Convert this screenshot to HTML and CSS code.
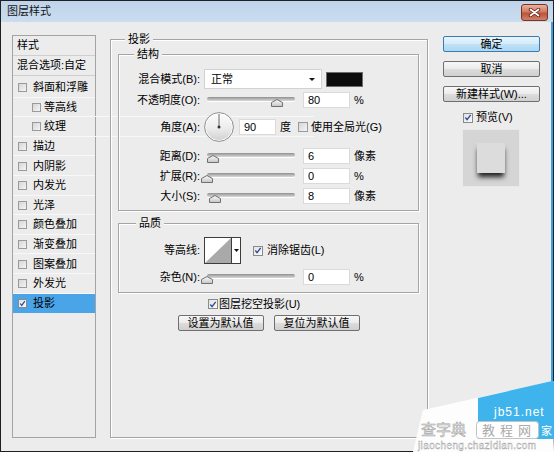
FILE: index.html
```html
<!DOCTYPE html>
<html lang="zh-CN">
<head>
<meta charset="utf-8">
<title>图层样式</title>
<link rel="stylesheet" href="styles.css">
</head>
<body>
<div class="window">
  <header class="titlebar">
    <span class="title">图层样式</span>
    <span class="close" aria-label="关闭">
      <svg width="13" height="9" viewBox="0 0 13 9"><path d="M2.5 1.5 L10.5 7.5 M10.5 1.5 L2.5 7.5" stroke="#5a1e12" stroke-width="3.4" stroke-linecap="round"/><path d="M2.5 1.5 L10.5 7.5 M10.5 1.5 L2.5 7.5" stroke="#fff" stroke-width="1.7" stroke-linecap="round"/></svg>
    </span>
  </header>
  <div class="content">
    <ul class="style-list">
      <li class="hdr">样式</li>
      <li class="hdr">混合选项:自定</li>
      <li class="item first"><span class="cb"></span>斜面和浮雕</li>
      <li class="item sub"><span class="cb"></span>等高线</li>
      <li class="item sub"><span class="cb"></span>纹理</li>
      <li class="item"><span class="cb"></span>描边</li>
      <li class="item"><span class="cb"></span>内阴影</li>
      <li class="item"><span class="cb"></span>内发光</li>
      <li class="item"><span class="cb"></span>光泽</li>
      <li class="item"><span class="cb"></span>颜色叠加</li>
      <li class="item"><span class="cb"></span>渐变叠加</li>
      <li class="item"><span class="cb"></span>图案叠加</li>
      <li class="item"><span class="cb"></span>外发光</li>
      <li class="item sel"><span class="cb on"><svg width="9" height="9" viewBox="0 0 9 9"><path d="M1.5 4.5 L3.5 7 L7.5 1.5" fill="none" stroke="#2a4b9b" stroke-width="1.5"/></svg></span>投影</li>
    </ul>

    <section class="group main">
      <div class="legend lg-main">投影</div>

      <div class="group sub struct">
        <div class="legend lg-struct">结构</div>
        <div class="row r1">
          <span class="lbl">混合模式(B):</span>
          <div class="select">正常<span class="arrow"></span></div>
          <span class="swatch"></span>
        </div>
        <div class="row r2">
          <span class="lbl">不透明度(O):</span>
          <div class="slider"><div class="track"></div><svg class="thumb" style="left:67px" width="12" height="8" viewBox="0 0 12 8"><defs><linearGradient id="tg" x1="0" y1="0" x2="0" y2="1"><stop offset="0" stop-color="#fdfdfd"/><stop offset="1" stop-color="#c4c4c4"/></linearGradient></defs><path d="M0.5 7.5 V3.5 L6 0.5 L11.5 3.5 V7.5 Z" fill="url(#tg)" stroke="#707070"/></svg></div>
          <span class="num">80</span>
          <span class="unit">%</span>
        </div>
        <div class="row r3">
          <span class="lbl">角度(A):</span>
          <svg class="dial" width="30" height="30" viewBox="0 0 30 30">
            <defs><linearGradient id="dg" x1="0" y1="0" x2="0" y2="1"><stop offset="0" stop-color="#fbfbfb"/><stop offset="0.55" stop-color="#ececec"/><stop offset="1" stop-color="#d2d2d2"/></linearGradient></defs>
            <circle cx="15" cy="15" r="14.4" fill="#fff" stroke="#8d8d8d"/>
            <circle cx="15" cy="15" r="13" fill="url(#dg)"/>
            <path d="M15 15 V2" stroke="#6a6a6a" stroke-width="1"/>
            <circle cx="15" cy="15" r="1.5" fill="#333"/>
          </svg>
          <span class="num n-angle">90</span>
          <span class="unit">度</span>
          <span class="cb cb-global"></span>
          <span class="cb-text">使用全局光(G)</span>
        </div>
        <div class="row r4">
          <span class="lbl">距离(D):</span>
          <div class="slider"><div class="track"></div><svg class="thumb" style="left:3px" width="12" height="8" viewBox="0 0 12 8"><path d="M0.5 7.5 V3.5 L6 0.5 L11.5 3.5 V7.5 Z" fill="url(#tg)" stroke="#707070"/></svg></div>
          <span class="num">6</span>
          <span class="unit">像素</span>
        </div>
        <div class="row r5">
          <span class="lbl">扩展(R):</span>
          <div class="slider"><div class="track"></div><svg class="thumb" style="left:-3px" width="12" height="8" viewBox="0 0 12 8"><path d="M0.5 7.5 V3.5 L6 0.5 L11.5 3.5 V7.5 Z" fill="url(#tg)" stroke="#707070"/></svg></div>
          <span class="num">0</span>
          <span class="unit">%</span>
        </div>
        <div class="row r6">
          <span class="lbl">大小(S):</span>
          <div class="slider"><div class="track"></div><svg class="thumb" style="left:5px" width="12" height="8" viewBox="0 0 12 8"><path d="M0.5 7.5 V3.5 L6 0.5 L11.5 3.5 V7.5 Z" fill="url(#tg)" stroke="#707070"/></svg></div>
          <span class="num">8</span>
          <span class="unit">像素</span>
        </div>
      </div>

      <div class="group sub quality">
        <div class="legend lg-quality">品质</div>
        <div class="row q1">
          <span class="lbl">等高线:</span>
          <svg class="contour" width="37" height="27" viewBox="0 0 37 27">
            <rect x="0.5" y="0.5" width="36" height="26" fill="#fff" stroke="#3c3c3c"/>
            <path d="M1 26 L27 1 V26 Z" fill="#a9a9a9"/>
            <path d="M27.5 1 V26" stroke="#3c3c3c"/>
            <path d="M30 12 H35 L32.5 15 Z" fill="#111"/>
          </svg>
          <span class="cb on cb-anti"><svg width="9" height="9" viewBox="0 0 9 9"><path d="M1.5 4.5 L3.5 7 L7.5 1.5" fill="none" stroke="#2a4b9b" stroke-width="1.5"/></svg></span>
          <span class="cb-text">消除锯齿(L)</span>
        </div>
        <div class="row q2">
          <span class="lbl">杂色(N):</span>
          <div class="slider"><div class="track"></div><svg class="thumb" style="left:-3px" width="12" height="8" viewBox="0 0 12 8"><path d="M0.5 7.5 V3.5 L6 0.5 L11.5 3.5 V7.5 Z" fill="url(#tg)" stroke="#707070"/></svg></div>
          <span class="num n-noise">0</span>
          <span class="unit">%</span>
        </div>
      </div>

      <div class="knockout"><span class="cb on"><svg width="9" height="9" viewBox="0 0 9 9"><path d="M1.5 4.5 L3.5 7 L7.5 1.5" fill="none" stroke="#2a4b9b" stroke-width="1.5"/></svg></span><span class="cb-text">图层挖空投影(U)</span></div>
      <div class="defaults">
        <button class="btn">设置为默认值</button>
        <button class="btn">复位为默认值</button>
      </div>
    </section>

    <aside class="side">
      <button class="btn primary">确定</button>
      <button class="btn">取消</button>
      <button class="btn">新建样式(W)...</button>
      <div class="preview-toggle"><span class="cb on"><svg width="9" height="9" viewBox="0 0 9 9"><path d="M1.5 4.5 L3.5 7 L7.5 1.5" fill="none" stroke="#2a4b9b" stroke-width="1.5"/></svg></span><span class="cb-text">预览(V)</span></div>
      <div class="preview"><div class="preview-square"></div></div>
    </aside>
  </div>

  <svg class="watermark" width="144" height="74" viewBox="0 0 144 74">
    <polygon points="13,32 142,3 144,74 3,74" fill="#fdfdfd"/>
    <polygon points="68,20 142,3 144,3 144,61 68,61" fill="#3fb3ec"/>
    <text x="84" y="38" fill="#fff" font-family="Liberation Sans, sans-serif" font-size="12" letter-spacing="1">jb51.net</text>
    <text x="11" y="57" fill="#f6f6f6" stroke="#a6a6a6" stroke-width="0.6" font-family="Noto Sans CJK SC, sans-serif" font-size="15">查字典</text>
    <rect x="66.5" y="43.5" width="62" height="17" rx="3" fill="#fff" stroke="#c2c2c2"/>
    <text x="72" y="57" fill="#a9a9a9" font-family="Noto Sans CJK SC, sans-serif" font-size="13" letter-spacing="5">教程网</text>
    <text x="131" y="57" fill="#fff" font-family="Noto Sans CJK SC, sans-serif" font-size="11">家</text>
    <text x="8" y="71" fill="#fff" stroke="#9c9c9c" stroke-width="0.4" font-family="Liberation Sans, sans-serif" font-size="10" textLength="118">jiaocheng.chazidian.com</text>
  </svg>
</div>
</body>
</html>
```

FILE: styles.css
```css
* { box-sizing: border-box; margin: 0; padding: 0; }
html, body { width: 554px; height: 452px; overflow: hidden; background: #ececec; }
body {
  font-family: "Liberation Sans", "Noto Sans CJK SC", sans-serif;
  font-size: 11px;
  line-height: 13px;
  color: #000;
}

.window {
  position: relative;
  width: 554px;
  height: 452px;
  border: 1px solid #202020;
  display: flex;
  flex-direction: column;
  background: #ececec;
}

.titlebar {
  height: 21px;
  flex: none;
  display: flex;
  align-items: center;
  justify-content: space-between;
  padding: 0 5px 0 6px;
  background: linear-gradient(#bfd4eb, #cadcef);
}
.title { color: #151515; }
.close {
  width: 27px;
  height: 17px;
  margin-top: 1px;
  border: 1px solid #7b3322;
  border-radius: 3px;
  background: linear-gradient(#eab19f, #d07a61 45%, #bb5539 55%, #d0806a);
  display: flex;
  align-items: center;
  justify-content: center;
}

.content {
  flex: 1;
  display: flex;
  align-items: flex-start;
  padding: 13px 0 0 11px;
  border-right: 2px solid #3c9fe3;
}

/* left list */
.style-list {
  list-style: none;
  flex: none;
  width: 84px;
  height: 403px;
  border: 1px solid #a3a3a3;
}
.hdr {
  height: 20px;
  line-height: 19px;
  padding-left: 4px;
  border-bottom: 1px solid #cfcfcf;
  white-space: nowrap;
}
.item {
  height: 19.6px;
  display: flex;
  align-items: center;
  padding-left: 5px;
  box-shadow: inset 0 -1px 0 #f8f8f8;
}
.item.first { margin-top: 2px; }
.item.sub { padding-left: 19px; }
.item .cb { width: 9px; height: 9px; margin-right: 6px; }
.item.sub .cb { margin-right: 3px; }
.item.sel {
  background: #4aa5e8;
  box-shadow: none;
}

/* checkbox */
.cb {
  flex: none;
  display: inline-flex;
  align-items: center;
  justify-content: center;
  width: 10px;
  height: 10px;
  border: 1px solid #9a9a9a;
  background: linear-gradient(135deg, #d6d6d6, #f4f4f4);
}
.cb.on { background: linear-gradient(135deg, #e2e2e2, #fbfbfb); border-color: #8a8a8a; }
.cb svg { display: block; }
.cb-text { margin-left: 3px; white-space: nowrap; }

/* group boxes */
.group {
  border: 1px solid #a5a5a5;
  box-shadow: inset 1px 1px 0 #fff, 1px 1px 0 #fff;
}
.legend {
  width: fit-content;
  margin-top: -7px;
  padding: 0 3px;
  background: #ececec;
  line-height: 13px;
}
.main {
  flex: none;
  width: 318px;
  height: 399px;
  margin: 4px 0 0 14px;
  padding: 0 8px 0 7px;
}
.lg-main { margin-left: 7px; }
.sub { width: 301px; }
.struct { margin-top: 8px; padding-bottom: 6px; }
.lg-struct { margin-left: 15px; }
.quality { margin-top: 12px; padding-bottom: 7px; }
.lg-quality { margin-left: 17px; }

.row { display: flex; align-items: center; }
.lbl { flex: none; width: 81px; text-align: right; white-space: nowrap; }
.r1 { margin-top: 8px; height: 20px; }
.r2 { margin-top: 3px; height: 16px; }
.r3 { margin-top: 4px; height: 30px; }
.r4 { margin-top: 6px; height: 16px; }
.r5 { margin-top: 4px; height: 16px; }
.r6 { margin-top: 4px; height: 16px; }
.q1 { margin-top: 7px; height: 27px; }
.q2 { margin-top: 5px; height: 16px; }

.select {
  position: relative;
  flex: none;
  width: 118px;
  height: 20px;
  margin-left: 4px;
  padding-left: 6px;
  line-height: 18px;
  background: #fff;
  border: 1px solid #d2d2d2;
}
.arrow {
  position: absolute;
  right: 6px;
  top: 8px;
  width: 0;
  height: 0;
  border-left: 3px solid transparent;
  border-right: 3px solid transparent;
  border-top: 3px solid #111;
}
.swatch {
  flex: none;
  width: 37px;
  height: 15px;
  margin-left: 4px;
  background: #0c0c0c;
  border: 1px solid #6c6c6c;
}

.slider {
  position: relative;
  flex: none;
  width: 92px;
  height: 16px;
  margin-left: 4px;
}
.track {
  width: 88px;
  height: 4px;
  margin: 5px 0 0 3px;
  border-radius: 2px;
  background: linear-gradient(#8f8f8f, #bdbdbd 60%, #d8d8d8);
  box-shadow: 0 1px 0 #fff;
}
.thumb { position: absolute; top: 7px; }

.num {
  flex: none;
  width: 47px;
  height: 16px;
  margin-left: 7px;
  padding-left: 4px;
  line-height: 14px;
  background: #fff;
  border: 1px solid #dadada;
}
.unit { margin-left: 4px; white-space: nowrap; }

.dial { flex: none; margin-left: 4px; display: block; }
.n-angle { width: 37px; margin-left: 5px; }
.cb-global { margin-left: 7px; }
.contour { flex: none; margin-left: 4px; display: block; }
.cb-anti { margin-left: 12px; }
.cb-anti + .cb-text { margin-left: 4px; }

.knockout {
  display: flex;
  align-items: center;
  height: 12px;
  margin-top: 5px;
  padding-left: 90px;
}
.knockout .cb-text { margin-left: 1px; }
.defaults {
  display: flex;
  justify-content: center;
  gap: 10px;
  margin-top: 5px;
}

.btn {
  height: 16px;
  font: inherit;
  line-height: 14px;
  color: #000;
  text-align: center;
  border: 1px solid #6f6f6f;
  border-radius: 2px;
  background: linear-gradient(#f7f7f7, #ebebeb 50%, #dcdcdc 51%, #d0d0d0);
  white-space: nowrap;
}
.defaults .btn { width: 86px; }
.btn.primary {
  border-color: #3b7cb0;
  background: linear-gradient(#e8f4fc, #d5ebf9 50%, #bfe1f6 51%, #acd7f3);
}

/* right column */
.side {
  flex: none;
  width: 97px;
  margin: 1px 0 0 15px;
  display: flex;
  flex-direction: column;
}
.side .btn { width: 97px; margin-bottom: 9px; }
.preview-toggle {
  display: flex;
  align-items: center;
  height: 11px;
  margin-top: 1px;
  padding-left: 20px;
}
.preview {
  width: 58px;
  height: 58px;
  margin: 6px 0 0 19px;
  padding-top: 13px;
  display: flex;
  justify-content: center;
  background: #d5d5d5;
  border: 1px solid #e9e9e9;
}
.preview-square {
  width: 28px;
  height: 30px;
  background: #dcdcdc;
  box-shadow: 0 5px 5px -1px rgba(0, 0, 0, 0.85);
}

.watermark {
  position: absolute;
  left: 409px;
  top: 377px;
}
```
